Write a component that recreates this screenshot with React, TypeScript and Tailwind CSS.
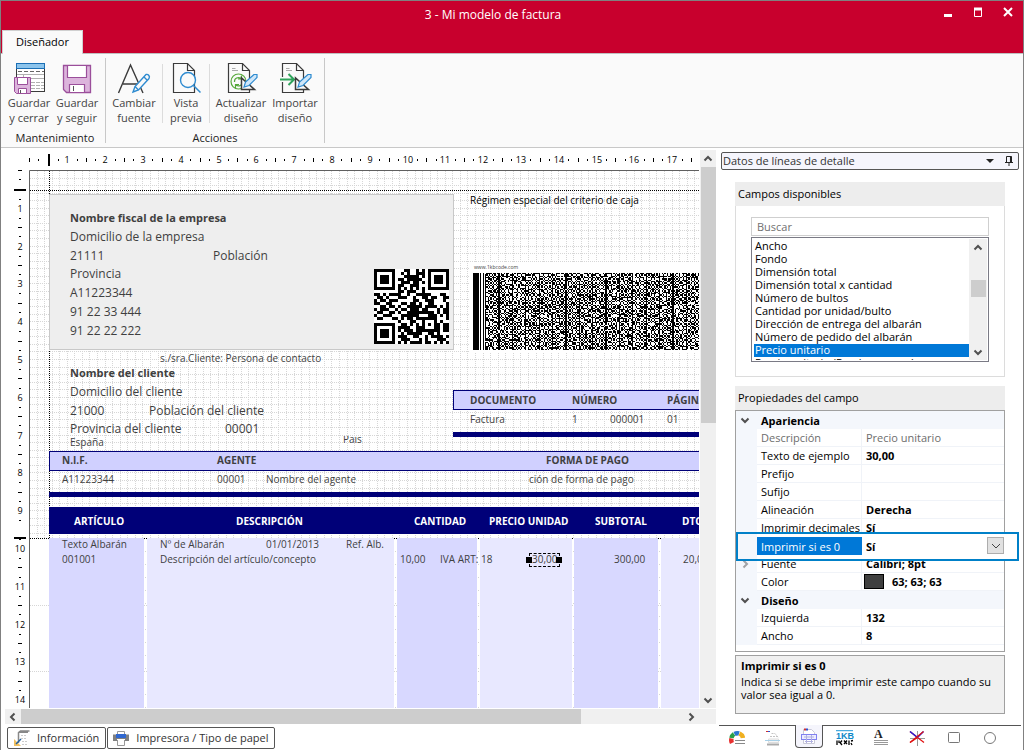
import React from "react";

type Field = {
  x: number;
  y: number;
  text: string;
  kind?: "large" | "largeBold" | "small" | "smallBold" | "head" | "note" | "tiny";
};

const PITCH = 37.8;

const kinds = {
  large: "text-[12px] text-[#3f3f3f]",
  largeBold: "text-[11px] font-bold text-[#3f3f3f]",
  small: "text-[10px] text-[#3f3f3f]",
  smallBold: "text-[10px] font-bold text-[#3f3f3f]",
  head: "text-[10px] font-bold text-white",
  note: "text-[10px] text-black",
  tiny: "text-[5px] text-[#3f3f3f]",
};

const fields: Field[] = [
  { x: 41, y: 48, text: "Nombre fiscal de la empresa", kind: "largeBold" },
  { x: 41, y: 67, text: "Domicilio de la empresa", kind: "large" },
  { x: 41, y: 86, text: "21111", kind: "large" },
  { x: 184, y: 86, text: "Población", kind: "large" },
  { x: 41, y: 104, text: "Provincia", kind: "large" },
  { x: 41, y: 123, text: "A11223344", kind: "large" },
  { x: 41, y: 142, text: "91 22 33 444", kind: "large" },
  { x: 41, y: 161, text: "91 22 22 222", kind: "large" },
  { x: 441, y: 30, text: "Régimen especial del criterio de caja", kind: "note" },
  { x: 445, y: 97, text: "www.1kbcode.com", kind: "tiny" },
  { x: 131, y: 188, text: "s./sra.Cliente: Persona de contacto" },
  { x: 41, y: 203, text: "Nombre del cliente", kind: "largeBold" },
  { x: 41, y: 222, text: "Domicilio del cliente", kind: "large" },
  { x: 41, y: 241, text: "21000", kind: "large" },
  { x: 120, y: 241, text: "Población del cliente", kind: "large" },
  { x: 41, y: 259, text: "Provincia del cliente", kind: "large" },
  { x: 196, y: 259, text: "00001", kind: "large" },
  { x: 41, y: 272, text: "España" },
  { x: 441, y: 230, text: "DOCUMENTO", kind: "smallBold" },
  { x: 543, y: 230, text: "NÚMERO", kind: "smallBold" },
  { x: 638, y: 230, text: "PÁGINA", kind: "smallBold" },
  { x: 441, y: 249, text: "Factura" },
  { x: 543, y: 249, text: "1" },
  { x: 581, y: 249, text: "000001" },
  { x: 638, y: 249, text: "01" },
  { x: 33, y: 290, text: "N.I.F.", kind: "smallBold" },
  { x: 188, y: 290, text: "AGENTE", kind: "smallBold" },
  { x: 517, y: 290, text: "FORMA DE PAGO", kind: "smallBold" },
  { x: 33, y: 309, text: "A11223344" },
  { x: 188, y: 309, text: "00001" },
  { x: 237, y: 309, text: "Nombre del agente" },
  { x: 500, y: 309, text: "ción de forma de pago" },
  { x: 45, y: 351, text: "ARTÍCULO", kind: "head" },
  { x: 207, y: 351, text: "DESCRIPCIÓN", kind: "head" },
  { x: 385, y: 351, text: "CANTIDAD", kind: "head" },
  { x: 460, y: 351, text: "PRECIO UNIDAD", kind: "head" },
  { x: 566, y: 351, text: "SUBTOTAL", kind: "head" },
  { x: 653, y: 351, text: "DTO", kind: "head" },
  { x: 33, y: 374, text: "Texto Albarán" },
  { x: 131, y: 374, text: "Nº de Albarán" },
  { x: 237, y: 374, text: "01/01/2013" },
  { x: 317, y: 374, text: "Ref. Alb." },
  { x: 33, y: 389, text: "001001" },
  { x: 131, y: 389, text: "Descripción del artículo/concepto" },
  { x: 371, y: 389, text: "10,00" },
  { x: 411, y: 389, text: "IVA ART:" },
  { x: 452, y: 389, text: "18" },
  { x: 503, y: 389, text: "30,00" },
  { x: 585, y: 389, text: "300,00" },
  { x: 654, y: 389, text: "20,00" },
];

const columns = [
  { x: 20, w: 95, dark: true },
  { x: 118, w: 247, dark: false },
  { x: 368, w: 80, dark: true },
  { x: 451, w: 92, dark: false },
  { x: 545, w: 84, dark: true },
  { x: 632, w: 900, dark: false },
];

const QR = [
  "1111111000110010101111111",
  "1000001001010011101000001",
  "1011101000111110101011101",
  "1011101011011111001011101",
  "1011101001110110101011101",
  "1000001011001110001000001",
  "1111111010101010101111111",
  "0000000011011100100000000",
  "1101011110010011111000110",
  "0110100011100100110110011",
  "1011011100000110011100010",
  "1100110001101101001100001",
  "0011011010011111011110101",
  "1011100101101110110001011",
  "0110011010011111111101011",
  "1001110001111110001110101",
  "0110001101011011111110001",
  "0000000010001100100010100",
  "1111111001101010101011011",
  "1000001011110011100011011",
  "1011101010111011111111011",
  "1011101001011111001101000",
  "1011101011100110010111101",
  "1000001001110001010001110",
  "1111111010101111011010101",
];

const qrPath = QR.map((row, y) =>
  row
    .split("")
    .map((c, x) => (c === "1" ? `M${x} ${y}h1v1h-1z` : ""))
    .join(""),
).join("");

function buildCode(cols: number, rows: number) {
  let seed = 20137;
  const next = () => {
    seed = (Math.imul(seed, 1664525) + 1013904223) >>> 0;
    return (seed >>> 8) % 100;
  };
  const cells: boolean[][] = [];
  let d = "";
  for (let x = 0; x < cols; x++) {
    cells.push([]);
    for (let y = 0; y < rows; y++) {
      const up = y > 0 && cells[x][y - 1];
      const left = x > 0 && cells[x - 1][y];
      const chance = up && left ? 18 : up || left ? 52 : 84;
      const on = x % 10 === 9 ? next() > 4 : next() < chance;
      cells[x].push(on);
      if (on && x > 8) d += `M${x} ${y}h1v1h-1z`;
    }
  }
  return d;
}
const codePath = buildCode(169, 58);

function Ruler({ vertical = false }: { vertical?: boolean }) {
  const ticks: React.ReactElement[] = [];
  const line = (pos: number, half: number, w: number) => {
    const p = Math.round(pos);
    ticks.push(
      vertical ? (
        <rect key={`t${pos}`} x={19 - half} y={p} width={half * 2} height={w} />
      ) : (
        <rect key={`t${pos}`} x={p} y={12 - half} width={w} height={half * 2} />
      ),
    );
  };
  const count = vertical ? 14 : 17;
  line(0, 2, 1);
  line(9.2, 1, 1);
  for (let n = 0; n <= count; n++) {
    const base = 19.4 + n * PITCH;
    const bold = n === 0 || (vertical && n === 9);
    line(vertical && n === 9 ? 367 : base, bold ? 6 : 2, bold ? 2 : 1);
    if (n === count) break;
    line(base + 9.2, 1, 1);
    line(base + 28.4, 1, 1);
    ticks.push(
      <text
        key={`n${n}`}
        x={vertical ? 19 : Math.round(base + 19)}
        y={vertical ? Math.round(base + 22.4) : 15}
        textAnchor="middle"
        fontSize="9"
      >
        {n + 1}
      </text>,
    );
  }
  return (
    <svg className="block h-full w-full overflow-hidden" fill="#000" shapeRendering="crispEdges" aria-hidden="true">
      {ticks}
    </svg>
  );
}

function GridLines() {
  const lines: React.ReactElement[] = [];
  for (let i = 1; i < 240; i++) {
    const x = Math.round(i * 7.56) + 0.5;
    lines.push(<line key={`v${i}`} x1={x} x2={x} y1="1" y2="368" />);
  }
  for (let i = 1; i < 49; i++) {
    const y = Math.round(i * 7.56) + 0.5;
    lines.push(<line key={`h${i}`} x1="1" x2="1800" y1={y} y2={y} />);
  }
  for (let i = 1; i < 12; i++) {
    const y = Math.round(368 + i * 66.5) + 0.5;
    lines.push(<line key={`b${i}`} x1="1" x2="1800" y1={y} y2={y} />);
  }
  const dots = [116, 366, 449, 544, 630].map((x) => (
    <line key={`d${x}`} x1={x + 0.5} x2={x + 0.5} y1="381" y2="1500" strokeDasharray="1 12" />
  ));
  return (
    <svg className="absolute inset-0 h-full w-full" aria-hidden="true">
      <g stroke="#d6d6d6" strokeDasharray="1 1" shapeRendering="crispEdges">
        {lines}
        {dots}
      </g>
      <g stroke="#000" strokeDasharray="1 1" shapeRendering="crispEdges">
        <line x1="20.5" x2="20.5" y1="1" y2="368" />
        <line x1="1" x2="1800" y1="20.5" y2="20.5" />
        <line x1="1" x2="1800" y1="368.5" y2="368.5" />
      </g>
      <path d="M0.5 3000V0.5H1800" fill="none" stroke="#606060" />
    </svg>
  );
}

function Canvas() {
  return (
    <div className="relative min-w-0 flex-1 overflow-hidden bg-white font-['Open_Sans','Noto_Sans',sans-serif]">
      <GridLines />
      <div className="absolute top-6 left-5 h-[156px] w-[405px] border border-[#c8c8c8] bg-[#eeeeee]" />
      <div className="absolute top-[92px] left-[441px] h-[90px] w-[232px] bg-white" />
      <svg className="absolute top-[99px] left-[345px] h-[75px] w-[75px] bg-white" viewBox="0 0 25 25" shapeRendering="crispEdges" role="img" aria-label="QR">
        <path d={qrPath} />
      </svg>
      <svg className="absolute top-[103px] left-[444px] h-[77px] w-[226px] bg-white" viewBox="0 0 169 58" preserveAspectRatio="none" shapeRendering="crispEdges" role="img" aria-label="1KB">
        <path d={"M0 0h4.5v58h-4.5zM5.2 0h1v58h-1zM7.2 0h1v58h-1z" + codePath} />
      </svg>

      <div className="absolute top-[220px] right-0 left-[424px] h-5 border border-r-0 border-[#000078] bg-[#d0d0ff]" />
      <div className="absolute top-[262px] right-0 left-[424px] h-[5px] bg-[#000078]" />
      <div className="absolute top-[281px] right-0 left-5 h-5 border border-r-0 border-[#000078] bg-[#d0d0ff]" />
      <div className="absolute top-[322px] right-0 left-5 h-[5px] bg-[#000078]" />
      <div className="absolute top-[337px] right-0 left-5 h-[27px] bg-[#000078]" />
      {columns.map((c) => (
        <div
          key={c.x}
          className={`absolute top-[368px] bottom-0 ${c.dark ? "bg-[#d8d8ff]" : "bg-[#e8e8ff]"}`}
          style={{ left: c.x, width: c.w }}
        />
      ))}

      {fields.map((f) => (
        <span
          key={`${f.x}-${f.y}`}
          className={`absolute leading-4 whitespace-nowrap ${kinds[f.kind ?? "small"]}`}
          style={{ left: f.x, top: f.y - 8 }}
        >
          {f.text}
        </span>
      ))}
      <div className="absolute top-[266px] left-[314px] h-2 overflow-hidden">
        <span className="-mt-1 block text-[10px] leading-[14px] text-[#3f3f3f]">Pais</span>
      </div>

      <div className="absolute top-[383px] left-[500px] h-[14px] w-[31px] border border-dashed border-black" />
      <div className="absolute top-[387px] left-[497px] size-1.5 bg-black" />
      <div className="absolute top-[387px] left-[527px] size-1.5 bg-black" />
    </div>
  );
}

function Chevron({ dir }: { dir: "up" | "down" | "left" | "right" }) {
  const paths = {
    up: "M1.5 6.5L5 3L8.5 6.5",
    down: "M1.5 3.5L5 7L8.5 3.5",
    left: "M6.5 1.5L3 5L6.5 8.5",
    right: "M3.5 1.5L7 5L3.5 8.5",
  };
  return (
    <svg className="size-2.5" viewBox="0 0 10 10" fill="none" stroke="#505050" strokeWidth="2" aria-hidden="true">
      <path d={paths[dir]} />
    </svg>
  );
}

const penPaths = (
  <>
    <path d="M30 12.500L19 24.500L17 30L22.500 28L33 16.500A2.700 2.700 0 0 0 30 12.500Z" fill="#fafafa" stroke="#2e8bd0" />
    <path d="M19 24.500L22.500 28M28 15L31 18" stroke="#2e8bd0" />
  </>
);

function DocIcon({ children }: { children?: React.ReactNode }) {
  return (
    <svg className="h-8 w-9" viewBox="0 0 36 32" fill="none" strokeWidth="1.200" aria-hidden="true">
      <path d="M26.500 30.500H5.500V1.500H19.500L26.500 8.500V30.500Z" fill="#fafafa" stroke="#3b3b3b" />
      <path d="M19.500 1.500V8.500H26.500" stroke="#3b3b3b" />
      {children}
    </svg>
  );
}

const trianglePen = (
  <>
    <path d="M18.500 16V27.500H31.500Z" fill="#fafafa" stroke="#3b3b3b" strokeWidth="1.500" />
    <path d="M31 12.500L22.500 20L21 25L26 23.500L34 15.500V12.500Z" fill="#cfe6f8" stroke="#2e8bd0" />
  </>
);

const icons = {
  saveClose: (
    <svg className="h-8 w-9" viewBox="0 0 36 32" fill="none" aria-hidden="true">
      <rect x="5.500" y="1.500" width="28" height="28" fill="#fff" stroke="#3b3b3b" />
      <rect x="5.500" y="1.500" width="28" height="5" fill="#8cc4ec" stroke="#1b6fb5" />
      <path d="M7 9.500H33" stroke="#666" strokeDasharray="4 2" />
      <path d="M6 12.500H33M12 16.500H33M12.500 12V16" stroke="#b0b0b0" />
      <path d="M20 20.500H33M20 23.500H33M20 26.500H33" stroke="#b0b0b0" strokeDasharray="4 1" />
      <path d="M3.500 15.500H19.500V31.500H5.500L3.500 29.500Z" fill="#dcb4dc" stroke="#9b4f9b" />
      <path d="M6.500 15.500H16.500V22.500H6.500ZM7.500 26.500H15.500V31.500H7.500Z" fill="#fff" stroke="#9b4f9b" />
      <path d="M9.500 28V31" stroke="#555" />
    </svg>
  ),
  save: (
    <svg className="h-8 w-9" viewBox="0 0 36 32" fill="none" aria-hidden="true">
      <path d="M4.500 3.500H31.500V30.500H7.500L4.500 27.500Z" fill="#dcb4dc" stroke="#9b4f9b" strokeWidth="1.300" />
      <path d="M8.500 3.500H27.500V15.500H8.500ZM10.500 22.500H25.500V30.500H10.500Z" fill="#fff" stroke="#9b4f9b" strokeWidth="1.200" />
      <path d="M14.500 24V29" stroke="#555" />
    </svg>
  ),
  font: (
    <svg className="h-8 w-9" viewBox="0 0 36 32" fill="none" strokeWidth="1.400" aria-hidden="true">
      <path d="M2.500 31L14.500 3L27 31M7 22H23" stroke="#3b3b3b" />
      {penPaths}
    </svg>
  ),
  preview: (
    <DocIcon>
      <circle cx="20" cy="18" r="7.500" fill="#fafafa" stroke="#2e8bd0" strokeWidth="1.400" />
      <path d="M25.500 23.500L32.500 30.500" stroke="#2e8bd0" strokeWidth="1.500" />
    </DocIcon>
  ),
  refresh: (
    <DocIcon>
      <path d="M9 6.500H12.500M9 8.500H15" stroke="#aaa" />
      <circle cx="15.500" cy="19.500" r="7.500" fill="#fafafa" stroke="#55a83a" />
      <path d="M11.500 20A4 4 0 0 1 18 16.500M18.500 13.500V17H15M19.500 19.500A4 4 0 0 1 13 23M12.500 26V22.500H16" stroke="#55a83a" />
      {trianglePen}
    </DocIcon>
  ),
  importar: (
    <DocIcon>
      <path d="M9 6.500H12.500M9 8.500H15" stroke="#aaa" />
      <path d="M4 17.500H15" stroke="#fafafa" strokeWidth="5" />
      <path d="M3 17.500H16M11.500 12L17 17.500L11.500 23" stroke="#2fa35b" strokeWidth="2" />
      {trianglePen}
    </DocIcon>
  ),
};

function RibbonButton({ icon, top, bottom, width }: { icon: React.ReactNode; top: string; bottom: string; width: string }) {
  return (
    <button type="button" className={`flex flex-col items-center ${width}`}>
      {icon}
      <span className="mt-px text-[11px] leading-[15px] whitespace-nowrap text-[#444]">
        {top}
        <br />
        {bottom}
      </span>
    </button>
  );
}

const listItems = [
  "Ancho",
  "Fondo",
  "Dimensión total",
  "Dimensión total x cantidad",
  "Número de bultos",
  "Cantidad por unidad/bulto",
  "Dirección de entrega del albarán",
  "Número de pedido del albarán",
  "Precio unitario",
  "Precio unitario (Precio con rec.)",
];

type Row = { name: string; value?: string; header?: boolean; muted?: boolean; swatch?: boolean; selected?: boolean; child?: boolean };

const rows: Row[] = [
  { name: "Apariencia", header: true },
  { name: "Descripción", value: "Precio unitario", muted: true },
  { name: "Texto de ejemplo", value: "30,00" },
  { name: "Prefijo", value: "" },
  { name: "Sufijo", value: "" },
  { name: "Alineación", value: "Derecha" },
  { name: "Imprimir decimales", value: "Sí" },
  { name: "Imprimir si es 0", value: "Sí", selected: true },
  { name: "Fuente", value: "Calibri; 8pt", child: true },
  { name: "Color", value: "63; 63; 63", swatch: true },
  { name: "Diseño", header: true },
  { name: "Izquierda", value: "132" },
  { name: "Ancho", value: "8" },
];

function PropertyRow({ row }: { row: Row }) {
  if (row.header) {
    return (
      <tr className="h-[18px] bg-[#f4f7fc]">
        <td className="w-[21px] p-0 pl-1">
          <Chevron dir="down" />
        </td>
        <th colSpan={2} scope="rowgroup" className="p-0 pl-1 text-left font-bold">
          {row.name}
        </th>
      </tr>
    );
  }
  if (row.selected) {
    return (
      <tr className="relative h-[18px]">
        <td className="p-0">
          <div className="absolute -top-[5px] -right-[15px] -bottom-1.5 left-0 z-10 border-2 border-[#0080c8] bg-white">
            <div className="h-full w-[19px] bg-[#f4f7fc]" />
          </div>
        </td>
        <th scope="row" className="relative z-20 bg-[#0078d7] p-0 pl-1 text-left font-normal text-white">
          <label htmlFor="print-zero">{row.name}</label>
        </th>
        <td className="relative z-20 bg-white p-0 pl-1">
          <select id="print-zero" className="block h-[17px] w-full appearance-none bg-white font-bold outline-none">
            <option>Sí</option>
            <option>No</option>
          </select>
          <span className="pointer-events-none absolute top-0 right-0 flex h-[17px] w-[17px] items-center justify-center border border-[#adadad] bg-[#e1e1e1]">
            <svg className="h-1.5 w-2.5" viewBox="0 0 10 6" fill="none" stroke="#444" aria-hidden="true">
              <path d="M1 1L5 5L9 1" />
            </svg>
          </span>
        </td>
      </tr>
    );
  }
  return (
    <tr className="h-[18px]">
      <td className="bg-[#f4f7fc] p-0 pl-1">{row.child && <span className="block opacity-50"><Chevron dir="right" /></span>}</td>
      <th
        scope="row"
        className={`border-r border-b border-[#f0f3f8] p-0 pl-1 text-left font-normal whitespace-nowrap ${row.muted ? "text-[#6d6d6d]" : ""}`}
      >
        {row.name}
      </th>
      <td className={`border-b border-[#f0f3f8] p-0 pl-1 ${row.muted ? "text-[#6d6d6d]" : "font-bold"}`}>
        {row.swatch ? (
          <span className="-ml-0.5 flex items-center gap-2">
            <span className="h-[15px] w-5 border border-black bg-[#3f3f3f]" />
            {row.value}
          </span>
        ) : (
          row.value
        )}
      </td>
    </tr>
  );
}

const tabIcons: { label: string; icon: React.ReactNode }[] = [
  {
    label: "Colores",
    icon: (
      <svg className="size-4" viewBox="0 0 16 16" fill="none" aria-hidden="true">
        <path d="M3 13A6 6 0 0 1 2.500 8.500" stroke="#e83030" strokeWidth="4.500" />
        <path d="M2.500 8A6 6 0 0 1 5 4" stroke="#28a048" strokeWidth="4.500" />
        <path d="M5.500 4A6 6 0 0 1 10 3.500" stroke="#2878d0" strokeWidth="4.500" />
        <path d="M10.500 3.500A6 6 0 0 1 14 8" stroke="#f0b020" strokeWidth="4.500" />
        <path d="M6 10.500H16M6 13.500H16" stroke="#888" />
      </svg>
    ),
  },
  {
    label: "Página",
    icon: (
      <svg className="size-4" viewBox="0 0 16 16" fill="none" aria-hidden="true">
        <path d="M5 6.500H13M6.500 3.500H10L13.500 8" stroke="#c4c4c4" strokeDasharray="2 1" />
        <path d="M3.500 9H13.500V12.500H3.500Z" fill="#f6f6f6" stroke="#ddd" />
        <path d="M1 1.500H3" stroke="#d03030" />
        <path d="M3 1.500H5" stroke="#3050d0" />
        <path d="M0 10.500H15" stroke="#a8d0e8" />
        <path d="M2 14.500H14" stroke="#aaa" strokeWidth="2" />
      </svg>
    ),
  },
  {
    label: "Líneas de detalle",
    icon: (
      <svg className="size-4" viewBox="0 0 16 16" fill="none" aria-hidden="true">
        <path d="M2.500 1.500H10.500L13.500 4.500V15.500H2.500Z" fill="#fff" stroke="#c8c8d8" />
        <path d="M3 1.500H5" stroke="#d03030" strokeWidth="2" />
        <path d="M5 1.500H7" stroke="#3050d0" strokeWidth="2" />
        <rect x="0.500" y="6.500" width="15" height="5" fill="#ececff" stroke="#8080f0" />
        <path d="M3 9H13M4 13.500H12M5.500 7V15M10.500 7V15" stroke="#b0b0e0" />
      </svg>
    ),
  },
  {
    label: "Código 1KB",
    icon: (
      <svg className="h-4 w-[18px]" viewBox="0 0 18 16" fill="none" aria-hidden="true">
        <path d="M0 0.700H17" stroke="#2098d8" />
        <text x="0" y="9" fontSize="9" fontWeight="bold" fill="#1088c8" fontFamily="Liberation Sans">1KB</text>
        <path d="M1 10.500V15M3 10.500V13M4 12.500L6 15M6 10.500L4 13M8 10.500L11 14M11 10.500L8 14M13 10.500V15M15 11L17 10.500M15 13L16 15" stroke="#000" strokeWidth="1.300" />
      </svg>
    ),
  },
  {
    label: "Texto",
    icon: (
      <svg className="size-4" viewBox="0 0 16 16" fill="none" aria-hidden="true">
        <text x="1" y="8" fontSize="12" fontWeight="bold" fill="#222" fontFamily="Liberation Serif">A</text>
        <path d="M1 10.500H15M1 12.500H15M1 14.500H15" stroke="#999" />
      </svg>
    ),
  },
  {
    label: "Línea",
    icon: (
      <svg className="size-4" viewBox="0 0 16 16" fill="none" aria-hidden="true">
        <path d="M8.500 1V16M1 8.500H16" stroke="#999" />
        <path d="M1 1.500L8.500 7.500M8.500 7.500L1 12.500" stroke="#e01010" strokeWidth="1.400" />
        <path d="M14.500 1.500L8.500 7.500" stroke="#2020e0" strokeWidth="1.400" />
        <path d="M1 1.500L8.500 7.500" stroke="#2020e0" strokeWidth="1.400" />
        <path d="M14.500 1.500L1 12.500M8.500 7.500L15 12.500" stroke="#e01010" strokeWidth="1.200" />
      </svg>
    ),
  },
  {
    label: "Rectángulo",
    icon: (
      <svg className="size-4" viewBox="0 0 16 16" fill="none" aria-hidden="true">
        <rect x="3.500" y="2.500" width="11" height="10" rx="1" stroke="#777" />
      </svg>
    ),
  },
  {
    label: "Elipse",
    icon: (
      <svg className="size-4" viewBox="0 0 16 16" fill="none" aria-hidden="true">
        <circle cx="9" cy="8" r="5.500" stroke="#777" />
      </svg>
    ),
  },
];

function SidePanel() {
  return (
    <aside className="flex w-[307px] shrink-0 flex-col bg-white text-[11px] text-black">
      <div className="mt-1 mr-1 ml-[5px] flex h-[18px] items-center rounded-xs border border-[#555] bg-[#f5f5fc] pl-px text-[#333]">
        <span className="flex-1">Datos de líneas de detalle</span>
        <button type="button" aria-label="Opciones" className="mr-2.5">
          <svg className="h-1 w-2" viewBox="0 0 8 4" aria-hidden="true">
            <path d="M0 0H8L4 4Z" fill="#222" />
          </svg>
        </button>
        <button type="button" aria-label="Anclar" className="mr-1">
          <svg className="size-2.5" viewBox="0 0 10 10" fill="none" stroke="#222" aria-hidden="true">
            <path d="M2.500 6V0.500H7.500V6M1 6.500H9M5 7V10" />
            <path d="M6.700 0.500V6" strokeWidth="1.500" />
          </svg>
        </button>
      </div>

      <section className="mt-3 mr-[18px] ml-[19px]">
        <h2 className="h-6 bg-[#ededed] pl-[3px] text-[11px] leading-[24px]">Campos disponibles</h2>
        <div className="border border-t-0 border-[#dcdcdc] px-[15px] pt-[11px] pb-[14px]">
          <input
            type="search"
            aria-label="Buscar"
            placeholder="Buscar"
            className="block h-[19px] w-full border border-[#cfcfcf] bg-white pl-[5px] placeholder:text-[#707070]"
          />
          <div className="mt-px flex h-[125px] border border-[#7a7a85] p-px">
            <ul role="listbox" aria-label="Campos" className="flex-1 overflow-hidden pt-px pl-px">
              {listItems.map((item) => {
                const on = item === "Precio unitario";
                return (
                  <li
                    key={item}
                    role="option"
                    aria-selected={on}
                    className={`h-[13px] pl-px text-[11px] leading-[12px] whitespace-nowrap ${on ? "bg-[#0078d7] text-white" : ""}`}
                  >
                    {item}
                  </li>
                );
              })}
            </ul>
            <div className="flex w-[18px] flex-col items-center bg-[#f0f0f0]">
              <button type="button" aria-label="Subir" className="flex h-[17px] items-center justify-center">
                <Chevron dir="up" />
              </button>
              <div className="mt-6 h-[17px] w-[15px] bg-[#cdcdcd]" />
              <button type="button" aria-label="Bajar" className="mt-auto flex h-[17px] items-center justify-center">
                <Chevron dir="down" />
              </button>
            </div>
          </div>
        </div>
      </section>

      <section className="mt-[9px] mr-[18px] ml-[19px]">
        <h2 className="h-6 bg-[#ededed] pl-[3px] text-[11px] leading-[24px]">Propiedades del campo</h2>
        <div className="border border-[#a0a0a0] pb-1.5">
          <table className="w-full table-fixed border-separate border-spacing-0 leading-[17px]">
            <colgroup>
              <col className="w-[21px]" />
              <col className="w-[105px]" />
              <col />
            </colgroup>
            <tbody>
              {rows.map((row) => (
                <PropertyRow key={`${row.name}-${row.value ?? ""}`} row={row} />
              ))}
            </tbody>
          </table>
        </div>
        <div className="mt-[3px] h-[59px] border border-[#a0a0a0] bg-[#f0f0f0] px-[5px] pt-[3px] leading-[13px]">
          <h3 className="font-bold">Imprimir si es 0</h3>
          <p className="mt-[3px]">Indica si se debe imprimir este campo cuando su valor sea igual a 0.</p>
        </div>
      </section>

      <nav aria-label="Secciones" className="mt-auto mr-0.5 ml-[3px] flex h-[25px] gap-2 border-t border-[#555] pl-1">
        {tabIcons.map((tab, i) => (
          <button
            key={tab.label}
            type="button"
            aria-label={tab.label}
            className={`flex h-[23px] w-7 items-center justify-center ${i === 2 ? "-mt-px rounded-b border border-t-0 border-[#555] bg-[#f5f5fc]" : ""}`}
          >
            {tab.icon}
          </button>
        ))}
      </nav>
    </aside>
  );
}

export default function App() {
  return (
    <div className="flex h-screen min-h-[700px] flex-col border border-b-0 border-[#808080] bg-white font-['Open_Sans','Noto_Sans',sans-serif]">
      <header className="flex h-[53px] shrink-0 flex-col justify-between border-b border-[#c0c0c0] bg-[#c8002d]">
        <div className="flex h-[29px] items-center">
          <h1 className="flex-1 pl-[52px] text-center text-[12px] text-white">3 - Mi modelo de factura</h1>
          <div className="flex w-[90px] pb-1.5">
            <button type="button" aria-label="Minimizar" className="flex h-5 w-[30px] items-center justify-center">
              <svg className="size-3" viewBox="0 0 12 12" aria-hidden="true">
                <path d="M2 8H10V11H2Z" fill="#fff" />
              </svg>
            </button>
            <button type="button" aria-label="Maximizar" className="flex h-5 w-[30px] items-center justify-center">
              <svg className="size-3" viewBox="0 0 12 12" fill="none" stroke="#fff" aria-hidden="true">
                <path d="M2.500 2V10.500H9.500V2" />
                <path d="M2 3H10" strokeWidth="3" />
              </svg>
            </button>
            <button type="button" aria-label="Cerrar" className="flex h-5 w-[30px] items-center justify-center">
              <svg className="size-3" viewBox="0 0 12 12" fill="none" stroke="#fff" strokeWidth="2" aria-hidden="true">
                <path d="M2 2L10 10M10 2L2 10" />
              </svg>
            </button>
          </div>
        </div>
        <button type="button" className="relative top-px ml-px h-6 w-[81px] shrink-0 self-start border border-b-0 border-[#d0d0d0] bg-[#fafafa] text-[11px] text-black">
          Diseñador
        </button>
      </header>

      <div className="flex h-[94px] shrink-0 border-b border-[#c8c8c8] bg-[#fafafa] pb-1 pl-1">
        <section className="mt-1 flex flex-col justify-between border-r border-[#c8c8c8]">
          <div className="flex pt-1 pr-1">
            <RibbonButton icon={icons.saveClose} top="Guardar" bottom="y cerrar" width="w-12" />
            <RibbonButton icon={icons.save} top="Guardar" bottom="y seguir" width="w-12" />
          </div>
          <h2 className="text-center text-[11px] leading-[10px] text-[#222]">Mantenimiento</h2>
        </section>
        <section className="mt-1 flex flex-col justify-between border-r border-[#c8c8c8]">
          <div className="flex pt-1 pr-1.5">
            <RibbonButton icon={icons.font} top="Cambiar" bottom="fuente" width="w-14" />
            <div className="my-0.5 w-px bg-[#dcdcdc]" />
            <RibbonButton icon={icons.preview} top="Vista" bottom="previa" width="w-[46px]" />
            <div className="my-0.5 w-px bg-[#dcdcdc]" />
            <RibbonButton icon={icons.refresh} top="Actualizar" bottom="diseño" width="w-[62px]" />
            <RibbonButton icon={icons.importar} top="Importar" bottom="diseño" width="w-[46px]" />
          </div>
          <h2 className="text-center text-[11px] leading-[10px] text-[#222]">Acciones</h2>
        </section>
      </div>

      <main className="flex min-h-0 flex-1">
        <div className="flex min-w-0 flex-1 flex-col">
          <div className="flex min-h-0 flex-1">
            <div className="flex min-w-0 flex-1 flex-col pr-px">
              <div className="ml-7 h-[22px] shrink-0">
                <Ruler />
              </div>
              <div className="flex min-h-0 flex-1">
                <div className="w-7 shrink-0 overflow-hidden">
                  <Ruler vertical />
                </div>
                <Canvas />
              </div>
            </div>
            <div className="mt-0.5 flex w-4 shrink-0 flex-col items-center bg-[#f0f0f0]">
              <button type="button" aria-label="Arriba" className="flex h-[17px] items-center justify-center">
                <Chevron dir="up" />
              </button>
              <div className="h-[256px] w-[15px] bg-[#cdcdcd]" />
              <button type="button" aria-label="Abajo" className="mt-auto flex h-[17px] items-center justify-center">
                <Chevron dir="down" />
              </button>
            </div>
          </div>
          <div className="ml-1 flex h-4 shrink-0 items-center border-t border-white bg-[#f0f0f0]">
            <button type="button" aria-label="Izquierda" className="flex w-4 items-center justify-center">
              <Chevron dir="left" />
            </button>
            <div className="h-[15px] w-[560px] bg-[#cdcdcd]" />
            <button type="button" aria-label="Derecha" className="mr-[17px] ml-auto flex w-[17px] items-center justify-center">
              <Chevron dir="right" />
            </button>
          </div>
          <div className="mt-[3px] mb-px ml-1.5 flex h-[22px] shrink-0 gap-px text-[11px] text-[#333]">
            <button type="button" className="flex items-center gap-[7px] rounded-xs border border-[#555] bg-white px-1.5">
              <svg className="h-[17px] w-4" viewBox="0 0 16 17" fill="none" aria-hidden="true">
                <path d="M4.500 13V2.500L6.500 1H15.500" stroke="#888" strokeWidth="1.500" />
                <path d="M5 2H14" stroke="#888" strokeWidth="2" />
                <path d="M7 5.500H13M7 8.500H13M8 11.500H13M8 14.500H13" stroke="#ccc" strokeDasharray="2 1" />
                <path d="M0 9V16H7L4 13Z" fill="#f0c060" />
                <path d="M2 14L7 9" stroke="#2060a0" strokeWidth="1.500" />
              </svg>
              Información
            </button>
            <button type="button" className="flex items-center gap-[7px] rounded-xs border border-[#555] bg-white px-[5px]">
              <svg className="size-4" viewBox="0 0 16 16" fill="none" aria-hidden="true">
                <path d="M4.500 5V1.500H11.500V5" stroke="#999" />
                <path d="M0 4.500H16V11H12V9H4V11H0Z" fill="#808080" />
                <path d="M3 4H13V8H3Z" fill="#3068d0" />
                <path d="M4.500 10V15.500H11.500V10" stroke="#999" />
              </svg>
              Impresora / Tipo de papel
            </button>
          </div>
        </div>
        <SidePanel />
      </main>
    </div>
  );
}
